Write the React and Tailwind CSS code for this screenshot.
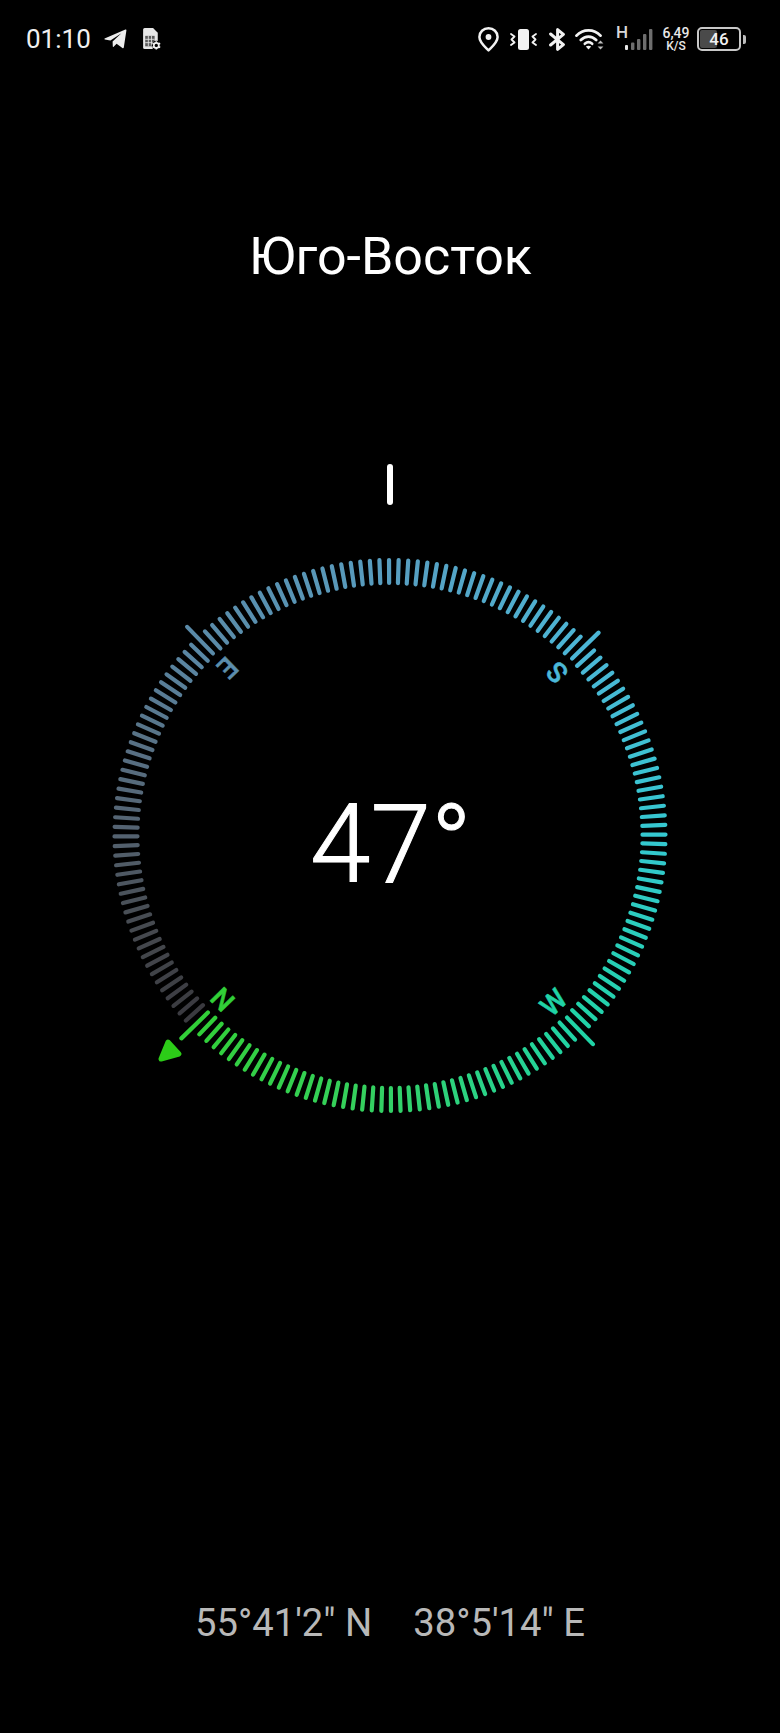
import React from "react";

const ROT = 45.8;
const STOPS = [
  [-132.2, [58, 58, 63]],
  [-110, [70, 74, 80]],
  [-90, [84, 98, 112]],
  [-70, [88, 113, 133]],
  [-44.2, [90, 138, 168]],
  [0, [88, 158, 192]],
  [46, [76, 182, 214]],
  [90, [53, 200, 208]],
  [136, [32, 211, 166]],
  [160, [42, 210, 134]],
  [185, [53, 208, 95]],
  [225.9, [50, 207, 56]],
];

function tickColor(a) {
  let x = a > 225.9 ? a - 360 : a;
  for (let i = 0; i < STOPS.length - 1; i++) {
    const [a0, c0] = STOPS[i];
    const [a1, c1] = STOPS[i + 1];
    if (x >= a0 && x <= a1) {
      const t = (x - a0) / (a1 - a0);
      return `rgb(${c0.map((v, k) => Math.round(v + (c1[k] - v) * t)).join(",")})`;
    }
  }
  return `rgb(${STOPS[0][1].join(",")})`;
}

const CX = 330;
const CY = 330.5;

function Dial() {
  const ticks = [];
  for (let i = 0; i < 180; i++) {
    const a = ROT + i * 2;
    const major = i % 45 === 0;
    const r0 = major ? 254 : 252.5;
    const r1 = major ? 291 : 275.5;
    const rad = (a * Math.PI) / 180;
    const s = Math.sin(rad);
    const c = Math.cos(rad);
    ticks.push(
      <line
        key={i}
        x1={CX + r0 * s}
        y1={CY - r0 * c}
        x2={CX + r1 * s}
        y2={CY - r1 * c}
        stroke={tickColor(a % 360)}
        strokeWidth="4.2"
        strokeLinecap="round"
      />
    );
  }
  return (
    <svg width="660" height="661" viewBox="0 0 660 661" className="absolute inset-0">
      {ticks}
      <polygon
        points="108,537 119,549 101,554"
        fill="#2ccc18"
        stroke="#2ccc18"
        strokeWidth="5"
        strokeLinejoin="round"
      />
    </svg>
  );
}

function Telegram() {
  return (
    <svg width="23" height="20" viewBox="0 0 23 20">
      <path
        d="M0.6 9.6 L21.4 0.6 Q22.6 0.2 22.4 1.6 L19.8 18.4 Q19.5 19.6 18.4 19 L12.6 14.8 L9.6 17.8 Q8.8 18.4 8.8 17.2 L8.6 12.4 L17.4 4.2 L6.4 11.6 L0.8 10.6 Q0 10.2 0.6 9.6 Z"
        fill="#ededed"
      />
    </svg>
  );
}

function Sim() {
  return (
    <svg width="18" height="22" viewBox="0 0 17 21">
      <path d="M1.5 0 H9.5 L14 4.5 V13 L9 20 H1.5 Q0 20 0 18.5 V1.5 Q0 0 1.5 0 Z" fill="#e6e6e6" />
      <rect x="2" y="7.5" width="9" height="10" fill="#5a5a5a" />
      <path d="M5 7.5 V17.5 M8 7.5 V17.5 M2 10.8 H11 M2 14 H11" stroke="#e6e6e6" strokeWidth="0.8" />
      <circle cx="12.6" cy="16.6" r="4.4" fill="#000" />
      <circle cx="12.6" cy="16.6" r="2.4" fill="none" stroke="#f0f0f0" strokeWidth="1.6" />
      <path d="M12.6 12.6 V14 M12.6 19.2 V20.6 M8.9 14.6 L10.2 15.3 M15 17.9 L16.3 18.6 M8.9 18.6 L10.2 17.9 M15 15.3 L16.3 14.6" stroke="#f0f0f0" strokeWidth="1.5" />
    </svg>
  );
}

function Pin() {
  return (
    <svg width="21" height="25" viewBox="0 0 21 25">
      <path
        d="M10.5 23.4 C7 19.8 1.4 15.4 1.4 10 C1.4 5 5.4 1.3 10.5 1.3 C15.6 1.3 19.6 5 19.6 10 C19.6 15.4 14 19.8 10.5 23.4 Z"
        fill="none"
        stroke="#f2f2f2"
        strokeWidth="2.5"
        strokeLinejoin="round"
      />
      <circle cx="10.5" cy="10" r="2.9" fill="#f2f2f2" />
    </svg>
  );
}

function Vibrate() {
  return (
    <svg width="27" height="21" viewBox="0 0 27 21">
      <rect x="8" y="0" width="11" height="21" rx="2.5" fill="#f2f2f2" />
      <path d="M1 5 L4.5 7.5 L1.5 10.5 L4.5 13.5 L1 16" fill="none" stroke="#f2f2f2" strokeWidth="1.8" strokeLinejoin="round" strokeLinecap="round" />
      <path d="M26 5 L22.5 7.5 L25.5 10.5 L22.5 13.5 L26 16" fill="none" stroke="#f2f2f2" strokeWidth="1.8" strokeLinejoin="round" strokeLinecap="round" />
    </svg>
  );
}

function Bluetooth() {
  return (
    <svg width="17" height="23" viewBox="0 0 17 23">
      <path
        d="M1.6 6 L14.4 16.6 L8.6 21.4 V1.6 L14.4 6.4 L1.6 17"
        fill="none"
        stroke="#f2f2f2"
        strokeWidth="3"
        strokeLinejoin="round"
        strokeLinecap="round"
      />
    </svg>
  );
}

function Wifi() {
  return (
    <svg width="29" height="22" viewBox="0 0 29 22">
      <path d="M1.5 7.6 C8 0.6 19 0.6 25.5 7.6" fill="none" stroke="#f2f2f2" strokeWidth="2.8" strokeLinecap="round" />
      <path d="M5.8 12 C10.4 7.4 16.6 7.4 21.2 12" fill="none" stroke="#f2f2f2" strokeWidth="2.8" strokeLinecap="round" />
      <path d="M9.8 15.8 C12 13.8 15 13.8 17.2 15.8" fill="none" stroke="#f2f2f2" strokeWidth="2.6" strokeLinecap="round" />
      <path d="M13.5 21.6 L10.8 18.6 Q13.5 16.8 16.2 18.6 Z" fill="#f2f2f2" />
      <path d="M25.5 12.4 L28.4 15.4 H22.6 Z M25.5 21.6 L28.4 18.4 H22.6 Z" fill="#bdbdbd" />
    </svg>
  );
}

function Signal() {
  return (
    <div className="relative h-[24px] w-[37px]">
      <span className="absolute left-0 top-[-4px] text-[17px] font-medium leading-[18px] text-[#d8d8d8]">H</span>
      <svg width="37" height="24" viewBox="0 0 37 24" className="absolute inset-0">
        <rect x="9" y="18" width="3" height="5" rx="1" fill="#e8e8e8" />
        <rect x="15" y="15.5" width="3.4" height="7.5" rx="1" fill="#6e6e6e" />
        <rect x="21" y="12" width="3.4" height="11" rx="1" fill="#6e6e6e" />
        <rect x="27" y="7" width="3.4" height="16" rx="1" fill="#6e6e6e" />
        <rect x="33" y="2" width="3.4" height="21" rx="1" fill="#6e6e6e" />
      </svg>
    </div>
  );
}

function Battery() {
  return (
    <div className="flex items-center gap-[2px]">
      <div className="relative flex h-[24px] w-[44px] items-center justify-center overflow-hidden rounded-[5px] border-2 border-[#c8c8c8]">
        <div className="absolute bottom-[1px] left-[1px] top-[1px] w-[17px] rounded-[2px] bg-[#4a4a4a]" />
        <span className="relative text-[17px] font-medium leading-none text-[#f0f0f0]">46</span>
      </div>
      <div className="h-[9px] w-[3px] rounded-r-[2px] bg-[#bdbdbd]" />
    </div>
  );
}

export default function App() {
  return (
    <div
      className="flex h-[1733px] w-[780px] flex-col bg-black text-white"
      style={{ fontFamily: "Roboto, 'Noto Sans', sans-serif" }}
    >
      <div className="flex h-[78px] items-center justify-between pl-[26px] pr-[34px]">
        <div className="flex items-center">
          <span className="text-[26px] leading-none text-[#f0f0f0]">01:10</span>
          <span className="ml-[13px] flex"><Telegram /></span>
          <span className="ml-[16px] flex"><Sim /></span>
        </div>
        <div className="flex items-center">
          <Pin />
          <span className="ml-[11px] flex"><Vibrate /></span>
          <span className="ml-[12px] flex"><Bluetooth /></span>
          <span className="ml-[9px] flex"><Wifi /></span>
          <span className="ml-[12px] flex"><Signal /></span>
          <div className="ml-[9px] flex w-[28px] flex-col items-center font-medium text-[#e8e8e8]">
            <span className="text-[14px] leading-[15px]">6,49</span>
            <span className="text-[12px] leading-[11px]">K/S</span>
          </div>
          <span className="ml-[7px] flex"><Battery /></span>
        </div>
      </div>

      <h1 className="mt-[147px] pl-[1px] text-center text-[52px] font-normal leading-[64px] text-white">Юго-Восток</h1>

      <div className="mx-auto mt-[175px] h-[41px] w-[6px] rounded-full bg-white" />

      <div className="relative mx-auto h-[661px] w-[660px]">
        <Dial />
        <span className="absolute left-[162px] top-[495px] -translate-x-1/2 -translate-y-1/2 rotate-[45.8deg] text-[28px] font-medium leading-none text-[#32cf38] [-webkit-text-stroke-width:0.5px]">N</span>
        <span className="absolute left-[167px] top-[162px] -translate-x-1/2 -translate-y-1/2 rotate-[135.8deg] text-[28px] font-medium leading-none text-[#5c8eac] [-webkit-text-stroke-width:0.5px]">E</span>
        <span className="absolute left-[498px] top-[167px] -translate-x-1/2 -translate-y-1/2 rotate-[225.8deg] text-[28px] font-medium leading-none text-[#4cb8d8] [-webkit-text-stroke-width:0.5px]">S</span>
        <span className="absolute left-[494px] top-[498px] -translate-x-1/2 -translate-y-1/2 rotate-[-44.2deg] text-[28px] font-medium leading-none text-[#20d3a6] [-webkit-text-stroke-width:0.5px]">W</span>
        <div className="absolute left-0 right-0 top-[284px] pl-[2px] text-center text-[109px] font-light leading-[112px] text-white [-webkit-text-stroke-width:1px]">47°</div>
      </div>

      <div className="mt-auto flex justify-center gap-[41px] pb-[84px] text-[38.2px] leading-[52px] text-[#b8b8b8]">
        <span>55°41'2" N</span>
        <span>38°5'14" E</span>
      </div>
    </div>
  );
}
